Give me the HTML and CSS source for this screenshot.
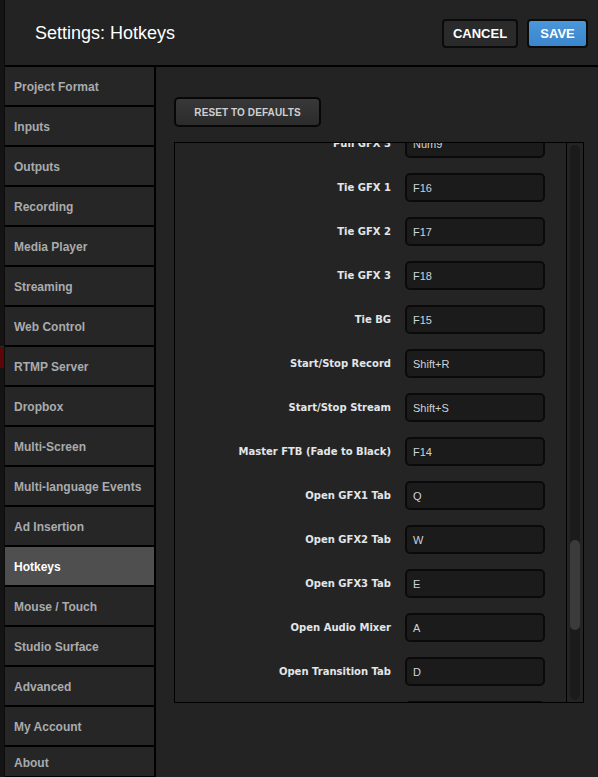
FILE: index.html
```html
<!DOCTYPE html>
<html>
<head>
<meta charset="utf-8">
<link rel="stylesheet" href="styles.css">
</head>
<body>
<div class="app">
  <div class="backdrop">
    <div class="bd-top"></div>
    <div class="bd-red"></div>
  </div>
  <div class="dialog">
    <div class="header">
      <div class="title">Settings: Hotkeys</div>
      <button class="btn btn-cancel">CANCEL</button>
      <button class="btn btn-save">SAVE</button>
    </div>
    <div class="main">
      <div class="sidebar">
        <div class="nav">Project Format</div>
        <div class="nav">Inputs</div>
        <div class="nav">Outputs</div>
        <div class="nav">Recording</div>
        <div class="nav">Media Player</div>
        <div class="nav">Streaming</div>
        <div class="nav">Web Control</div>
        <div class="nav">RTMP Server</div>
        <div class="nav">Dropbox</div>
        <div class="nav">Multi-Screen</div>
        <div class="nav">Multi-language Events</div>
        <div class="nav">Ad Insertion</div>
        <div class="nav active">Hotkeys</div>
        <div class="nav">Mouse / Touch</div>
        <div class="nav">Studio Surface</div>
        <div class="nav">Advanced</div>
        <div class="nav">My Account</div>
        <div class="nav last">About</div>
      </div>
      <div class="content">
        <button class="btn-reset">RESET TO DEFAULTS</button>
        <div class="panel">
          <div class="list">
            <div class="rows">
              <div class="row"><div class="label">Pull GFX 3</div><div class="field">Num9</div></div>
              <div class="row"><div class="label">Tie GFX 1</div><div class="field">F16</div></div>
              <div class="row"><div class="label">Tie GFX 2</div><div class="field">F17</div></div>
              <div class="row"><div class="label">Tie GFX 3</div><div class="field">F18</div></div>
              <div class="row"><div class="label">Tie BG</div><div class="field">F15</div></div>
              <div class="row"><div class="label">Start/Stop Record</div><div class="field">Shift+R</div></div>
              <div class="row"><div class="label">Start/Stop Stream</div><div class="field">Shift+S</div></div>
              <div class="row"><div class="label">Master FTB (Fade to Black)</div><div class="field">F14</div></div>
              <div class="row"><div class="label">Open GFX1 Tab</div><div class="field">Q</div></div>
              <div class="row"><div class="label">Open GFX2 Tab</div><div class="field">W</div></div>
              <div class="row"><div class="label">Open GFX3 Tab</div><div class="field">E</div></div>
              <div class="row"><div class="label">Open Audio Mixer</div><div class="field">A</div></div>
              <div class="row"><div class="label">Open Transition Tab</div><div class="field">D</div></div>
              <div class="row"><div class="label">Open Media Tab</div><div class="field">M</div></div>
            </div>
          </div>
          <div class="scroll">
            <div class="track"><div class="thumb"></div></div>
          </div>
        </div>
      </div>
    </div>
  </div>
</div>
</body>
</html>
```
FILE: styles.css
```css
* { box-sizing: border-box; }
html, body {
  margin: 0;
  padding: 0;
}
body {
  width: 598px;
  height: 777px;
  overflow: hidden;
  background: #151515;
  font-family: "Liberation Sans", Arial, sans-serif;
}
.app {
  display: flex;
  height: 777px;
}
.backdrop {
  width: 4px;
  display: flex;
  flex-direction: column;
  background: #141414;
}
.bd-top {
  height: 347px;
  border-bottom: 1px solid #2a2a2a;
}
.bd-red {
  height: 21px;
  background: #5c0707;
}
.dialog {
  flex: 1;
  display: flex;
  flex-direction: column;
  background: #232323;
  border-left: 1px solid #0c0c0c;
  min-width: 0;
}
.header {
  height: 67px;
  flex: none;
  display: flex;
  align-items: center;
  padding: 1px 10px 0 30px;
  border-bottom: 2px solid #000;
  gap: 9px;
}
.title {
  flex: 1;
  color: #fff;
  font-size: 18px;
}
.btn {
  height: 29px;
  border: 2px solid #0b0b0b;
  border-radius: 4px;
  font-family: "Liberation Sans", Arial, sans-serif;
  font-weight: bold;
  font-size: 13px;
  color: #fff;
  padding: 0;
  cursor: pointer;
}
.btn-cancel {
  width: 76px;
  background: #2a2a2a;
}
.btn-save {
  width: 61px;
  background: linear-gradient(#4b97da, #3a85cc);
}
.main {
  flex: 1;
  display: flex;
  min-height: 0;
}
.sidebar {
  width: 151px;
  flex: none;
  border-right: 2px solid #000;
  display: flex;
  flex-direction: column;
  overflow: hidden;
}
.nav {
  height: 40px;
  flex: none;
  display: flex;
  align-items: center;
  padding-left: 9px;
  padding-top: 2px;
  background: #262626;
  border-bottom: 2px solid #000;
  color: #a9abad;
  font-weight: bold;
  font-size: 12px;
}
.nav.active {
  background: #4f4f4f;
  color: #fff;
}
.nav.last {
  height: 31px;
  padding-top: 2px;
}
.content {
  flex: 1;
  padding: 30px 14px 0 18px;
  display: flex;
  flex-direction: column;
  align-items: flex-start;
}
.btn-reset {
  width: 147px;
  height: 30px;
  border: 2px solid #070707;
  border-radius: 5px;
  background: linear-gradient(#383838, #2b2b2b);
  color: #cfcfcf;
  font-family: "Liberation Sans", Arial, sans-serif;
  font-weight: bold;
  font-size: 10px;
  letter-spacing: 0.1px;
  padding: 0;
}
.panel {
  margin-top: 15px;
  width: 410px;
  height: 561px;
  border: 1px solid #000;
  display: flex;
  background: #242424;
}
.list {
  flex: 1;
  overflow: hidden;
}
.rows {
  margin-top: -14px;
  display: flex;
  flex-direction: column;
  gap: 15px;
}
.row {
  height: 29px;
  display: flex;
  align-items: center;
  gap: 14px;
}
.label {
  width: 216px;
  text-align: right;
  color: #e2e6ea;
  font-family: "DejaVu Sans", Verdana, sans-serif;
  font-weight: bold;
  font-size: 10px;
}
.field {
  width: 140px;
  height: 29px;
  border: 2px solid #0a0a0a;
  border-radius: 5px;
  background: #1b1b1b;
  color: #cdd3d9;
  font-size: 11px;
  display: flex;
  align-items: center;
  padding-left: 6px;
}
.scroll {
  width: 17px;
  flex: none;
  border-left: 1px solid #000;
  padding: 2px 3px 2px 3px;
  display: flex;
}
.track {
  width: 10px;
  flex: 1;
  border-radius: 5px;
  background: #1b1b1b;
}
.thumb {
  margin-top: 395px;
  height: 90px;
  border-radius: 5px;
  background: #3b3b3b;
}
```
